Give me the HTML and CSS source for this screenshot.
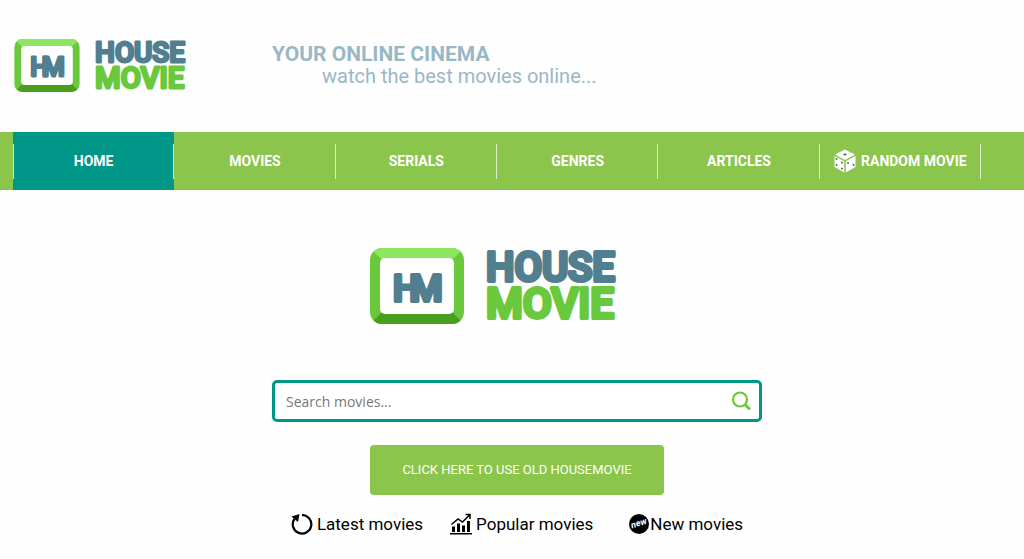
FILE: index.html
```html
<!DOCTYPE html>
<html lang="en">
<head>
  <meta charset="UTF-8">
  <meta name="viewport" content="width=device-width, initial-scale=1.0">
  <title>House Movie</title>
  <link rel="stylesheet" href="styles.css">
</head>
<body>

  <!-- shared logo -->
  <svg class="defs" width="0" height="0" aria-hidden="true">
    <symbol id="logo" viewBox="0 0 246 76" overflow="visible">
      <clipPath id="frame"><rect width="94" height="76" rx="12"/></clipPath>
      <g clip-path="url(#frame)">
        <rect width="94" height="76" fill="#69c83b"/>
        <path d="M0 0H94L78 16H16Z" fill="#8ce660"/>
        <path d="M0 76L14 62H80L94 76Z" fill="#489f1d"/>
      </g>
      <rect x="10" y="10" width="74" height="56" rx="5" fill="#fff"/>
      <g class="logo-text">
        <text class="logo-blue logo-mark" x="23" y="53">H<tspan dx="-9">M</tspan></text>
        <text class="logo-blue" x="116" y="33">HOUSE</text>
        <text class="logo-green" x="116" y="70">MOVIE</text>
      </g>
    </symbol>
  </svg>

  <header class="header">
    <a href="#" class="header-logo" aria-label="House Movie"><svg viewBox="0 0 246 76"><use href="#logo"/></svg></a>
    <div class="slogan">
      <strong>YOUR ONLINE CINEMA</strong>
      <span>watch the best movies online...</span>
    </div>
  </header>

  <nav class="navbar">
    <ul class="menu">
      <li><a href="#" class="active">HOME</a></li>
      <li><a href="#">MOVIES</a></li>
      <li><a href="#">SERIALS</a></li>
      <li><a href="#">GENRES</a></li>
      <li><a href="#">ARTICLES</a></li>
      <li>
        <a href="#">
          <svg class="dice" viewBox="0 0 22 24" aria-hidden="true">
            <path d="M11 0.5L21 5.5L11 11L1 5.5Z M0.5 7L10.2 12.3V23.5L0.5 18Z M21.5 7L11.8 12.3V23.5L21.5 18Z" fill="#fff"/>
            <g fill="#53636b">
              <ellipse cx="11" cy="5.5" rx="1.7" ry="1"/>
              <circle cx="2.5" cy="10" r="1"/><circle cx="2.5" cy="16" r="1"/>
              <circle cx="8" cy="13.5" r="1"/><circle cx="8" cy="19.5" r="1"/>
              <circle cx="14" cy="14" r="1"/><circle cx="19.5" cy="16" r="1"/>
            </g>
          </svg>
          RANDOM MOVIE
        </a>
      </li>
    </ul>
  </nav>

  <main class="main">
    <svg class="main-logo" viewBox="0 0 246 76" role="img" aria-label="House Movie"><use href="#logo"/></svg>

    <form class="search">
      <input type="text" placeholder="Search movies..." aria-label="Search movies">
      <button type="button" aria-label="Search">
        <svg viewBox="0 0 20 20" fill="none" stroke="#69c83b" stroke-linecap="round">
          <circle cx="9" cy="8.5" r="7" stroke-width="2.2"/>
          <path d="M14.5 14L18 17.5" stroke-width="3"/>
        </svg>
      </button>
    </form>

    <a href="#" class="old-btn">CLICK HERE TO USE OLD HOUSEMOVIE</a>

    <div class="links">
      <a href="#">
        <svg viewBox="0 0 22 22" aria-hidden="true">
          <path d="M11 2A9.3 9.3 0 1 1 3.4 6" fill="none" stroke="#000" stroke-width="2.2"/>
          <path d="M0.5 3.5L8.5 1L7 9Z"/>
        </svg>
        Latest movies
      </a>
      <a href="#">
        <svg viewBox="0 0 22 22" aria-hidden="true">
          <path d="M0 20H22V21.5H0Z M2 13.5H5V19H2Z M7 10.5H10V19H7Z M12 12.5H15V19H12Z M17 8H20V19H17Z"/>
          <path d="M1.5 11.5L8 6L12.5 9L19.5 2M15.5 1.5H20V6" fill="none" stroke="#000" stroke-width="1.5"/>
        </svg>
        Popular movies
      </a>
      <a href="#" class="new">
        <svg viewBox="0 0 22 22" aria-hidden="true">
          <circle cx="11" cy="11" r="10"/>
          <text x="11" y="13" transform="rotate(-18 11 11)">new</text>
        </svg>
        New movies
      </a>
    </div>
  </main>

</body>
</html>
```
FILE: styles.css
```css
* {
  box-sizing: border-box;
}

body {
  margin: 0;
  background-color: #fefefe;
  font-family: Roboto, Arial, sans-serif;
}

a {
  text-decoration: none;
}

.defs {
  display: block;
}

.logo-text {
  font-size: 40px;
  font-weight: 500;
  stroke-width: 4px;
  stroke-linejoin: round;
}

.logo-mark {
  font-size: 37px;
}

.logo-blue {
  fill: #517f8f;
  stroke: #517f8f;
}

.logo-green {
  fill: #69c83b;
  stroke: #69c83b;
  font-size: 42px;
}

.header {
  display: flex;
  gap: 86px;
  padding: 39px 14px 40px;
}

.header-logo,
.header-logo svg {
  display: block;
  width: 172px;
  height: 53px;
  overflow: visible;
}

.slogan {
  display: flex;
  flex-direction: column;
  padding-top: 4px;
  color: #9ab7c5;
  font-size: 21px;
  line-height: 22px;
}

.slogan span {
  padding-left: 50px;
  font-size: 20px;
}

.navbar {
  background-color: #8bc54b;
  padding: 0 43px 0 13px;
}

.menu {
  display: grid;
  grid-template-columns: repeat(6, 1fr);
  margin: 0;
  padding: 0;
  list-style: none;
}

.menu a {
  display: flex;
  align-items: center;
  justify-content: center;
  gap: 5px;
  height: 58px;
  color: #fff;
  font-size: 14px;
  font-weight: bold;
  white-space: nowrap;
}

.menu a::after,
.menu a.active::before {
  content: "";
  width: 1px;
  height: 35px;
  margin-left: auto;
  background-color: #e0f0cc;
}

.menu a::before {
  content: "";
  width: 1px;
  margin-right: auto;
}

.menu a.active::before {
  margin: 0 auto 0 0;
}

.menu .active {
  background-color: #009788;
}

.dice {
  width: 22px;
  height: 24px;
}

.main {
  display: flex;
  flex-direction: column;
  align-items: center;
  padding: 58px 0 0 10px;
}

.main-logo {
  width: 246px;
  height: 76px;
  margin-right: 48px;
  overflow: visible;
}

.search {
  display: flex;
  align-items: center;
  width: 490px;
  max-width: 100%;
  height: 42px;
  margin: 56px 0 23px;
  border: 3px solid #009788;
  border-radius: 5px;
  background-color: #fff;
}

.search input {
  flex: 1;
  min-width: 0;
  padding: 0 11px;
  border: none;
  outline: none;
  background: none;
  font-family: "Open Sans", sans-serif;
  font-size: 14px;
}

.search input::placeholder {
  color: #777;
}

.search button {
  padding: 0 8px;
  border: none;
  background: none;
  cursor: pointer;
}

.search button svg {
  display: block;
  width: 20px;
  height: 20px;
}

.old-btn {
  padding: 0 32px;
  border-radius: 4px;
  background-color: #8bc54b;
  color: #fff;
  font-size: 13px;
  line-height: 50px;
}

.links {
  display: flex;
  gap: 27px;
  margin-top: 18px;
}

.links a {
  display: flex;
  align-items: center;
  gap: 4px;
  color: #000;
  font-size: 17px;
  line-height: 22px;
}

.links svg {
  width: 22px;
  height: 22px;
}

.links .new {
  gap: 0;
  margin-left: 8px;
}

.new text {
  fill: #fff;
  font-size: 9px;
  font-weight: bold;
  font-style: italic;
  text-anchor: middle;
}
```
